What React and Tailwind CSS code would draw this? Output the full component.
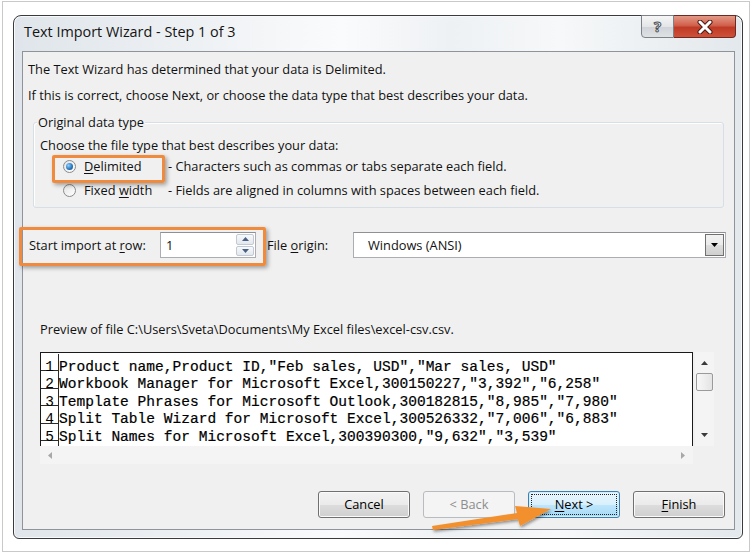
import React from "react";

const ui = "font-['Open_Sans','Noto_Sans',sans-serif]";
const mono = "font-['Liberation_Mono','Courier_New',monospace]";

function Radio({ checked }) {
  return (
    <span className="relative flex h-[13px] w-[13px] items-center justify-center rounded-full border border-[#8a8a8a] bg-[linear-gradient(135deg,#e4e4e4,#ffffff)]">
      {checked ? (
        <span className="h-[7px] w-[7px] rounded-full bg-[radial-gradient(circle_at_35%_35%,#8fd0ff_0%,#2a7bc0_55%,#0d3f78_100%)]" />
      ) : null}
    </span>
  );
}

function Btn({ children, kind }) {
  if (kind === "disabled") {
    return (
      <div className="flex h-[27px] w-[92px] items-center justify-center rounded-[3px] border border-[#b7bcc0] bg-[#f4f4f4] text-[12.8px] text-[#8d8d8d]">
        {children}
      </div>
    );
  }
  if (kind === "default") {
    return (
      <div className="flex h-[27px] w-[92px] items-center justify-center rounded-[3px] border border-[#3c7fb1] bg-[linear-gradient(180deg,#eaf6fd_0%,#d9f0fc_50%,#bee6fd_51%,#a7d9f5_100%)] p-[2px] shadow-[inset_0_0_0_1px_#cfeefe]">
        <div className="flex h-full w-full items-center justify-center border border-dotted border-[#222] text-[12.8px] text-black">
          {children}
        </div>
      </div>
    );
  }
  return (
    <div className="flex h-[27px] w-[92px] items-center justify-center rounded-[3px] border border-[#707070] bg-[linear-gradient(180deg,#f2f2f2_0%,#ebebeb_50%,#dddddd_51%,#cfcfcf_100%)] shadow-[inset_0_0_0_1px_#fafafa] text-[12.8px] text-black">
      {children}
    </div>
  );
}

const rows = [
  'Product name,Product ID,"Feb sales, USD","Mar sales, USD"',
  'Workbook Manager for Microsoft Excel,300150227,"3,392","6,258"',
  'Template Phrases for Microsoft Outlook,300182815,"8,985","7,980"',
  'Split Table Wizard for Microsoft Excel,300526332,"7,006","6,883"',
  'Split Names for Microsoft Excel,300390300,"9,632","3,539"',
];

export default function App() {
  return (
    <div className={`relative h-[554px] w-[755px] overflow-hidden bg-white pl-[2px] pt-[1px] ${ui}`}>
      <div className="h-[551px] w-[748px] border border-[#c9c9c9] pl-[10px] pt-[13px]">
        {/* window */}
        <div className="flex h-[524px] w-[730px] flex-col rounded-b-[6px] rounded-t-[8px] border border-[#3b3b3b] bg-[linear-gradient(90deg,#dfe5ea_0%,#eef1f4_25%,#fafbfc_45%,#eef1f4_60%,#f6f8f9_75%,#e3e8ec_100%)] shadow-[inset_0_0_0_1px_#f7f9fb]">
          {/* title bar */}
          <div className="flex h-[35px] items-start">
            <div className="ml-[10px] mt-[7px] text-[14.4px] leading-[18px] text-[#141414]">
              Text Import Wizard - Step 1 of 3
            </div>
            <div className="ml-auto mr-[6px] -mt-px flex">
              <div className="flex h-[23px] w-[33px] items-center justify-center rounded-bl-[4px] border border-[#7c8288] bg-[linear-gradient(180deg,#f6f6f6_0%,#e3e5e8_50%,#cfd3d7_51%,#dfe2e5_100%)]">
                <span className="text-[15px] font-bold leading-none text-white [-webkit-text-stroke:1px_#4b4f55]">?</span>
              </div>
              <div className="flex h-[23px] w-[62px] items-center justify-center rounded-br-[4px] border border-l-0 border-[#6d2a23] bg-[linear-gradient(180deg,#e39a88_0%,#d0604b_45%,#bf3a26_55%,#cf5139_100%)]">
                <svg width="20" height="14" viewBox="0 0 20 14">
                  <path d="M5 2 L15 12 M15 2 L5 12" stroke="#4a1a14" strokeWidth="5" strokeLinecap="round" />
                  <path d="M5 2 L15 12 M15 2 L5 12" stroke="#ffffff" strokeWidth="3" strokeLinecap="round" />
                </svg>
              </div>
            </div>
          </div>

          {/* content panel */}
          <div className="ml-[8px] flex h-[479px] w-[713px] flex-col border border-[#8e9499] bg-[#f0f0f0] text-[12.8px] text-[#111]">
            <div className="ml-[5px] mt-[9px] h-[16px] leading-[16px]">
              The Text Wizard has determined that your data is Delimited.
            </div>
            <div className="ml-[5px] mt-[10px] h-[16px] leading-[16px]">
              If this is correct, choose Next, or choose the data type that best describes your data.
            </div>

            {/* group box */}
            <div className="relative ml-[10px] mt-[19px] h-[86px] w-[691px] rounded-[3px] border border-[#d5dfe5] shadow-[inset_1px_1px_0_#ffffff]">
              <div className="absolute -top-[9px] left-[3px] bg-[#f0f0f0] px-[1px] leading-[16px]">
                Original data type
              </div>
              <div className="ml-[6px] mt-[14px] h-[16px] leading-[16px]">
                Choose the file type that best describes your data:
              </div>
              <div className="mt-[5px] flex h-[16px] items-center">
                <div className="ml-[29px]"><Radio checked /></div>
                <div className="ml-[8px] w-[84px] leading-[16px]">
                  <span className="underline decoration-1 underline-offset-2">D</span>elimited
                </div>
                <div className="leading-[16px]">- Characters such as commas or tabs separate each field.</div>
              </div>
              <div className="mt-[8px] flex h-[16px] items-center">
                <div className="ml-[29px]"><Radio /></div>
                <div className="ml-[8px] w-[84px] leading-[16px]">
                  Fixed <span className="underline decoration-1 underline-offset-2">w</span>idth
                </div>
                <div className="leading-[16px]">- Fields are aligned in columns with spaces between each field.</div>
              </div>
            </div>

            {/* start row */}
            <div className="mt-[24px] flex h-[26px] items-center">
              <div className="ml-[6px] w-[131px] leading-[16px]">
                Start import at <span className="underline decoration-1 underline-offset-2">r</span>ow:
              </div>
              <div className="flex h-[26px] w-[96px] items-center border border-[#abadb3] border-t-[#8e9096] bg-white">
                <div className="ml-[5px] flex-1 leading-[16px]">1</div>
                <div className="mr-[1px] flex h-[22px] w-[18px] flex-col gap-px">
                  <div className="flex flex-1 items-center justify-center rounded-[2px] border border-[#c3c9d2] bg-[linear-gradient(180deg,#f7f9fb,#e3e8ee)]">
                    <svg width="7" height="4" viewBox="0 0 7 4"><path d="M0 4 L3.5 0 L7 4 Z" fill="#4a5f82" /></svg>
                  </div>
                  <div className="flex flex-1 items-center justify-center rounded-[2px] border border-[#c3c9d2] bg-[linear-gradient(180deg,#f7f9fb,#e3e8ee)]">
                    <svg width="7" height="4" viewBox="0 0 7 4"><path d="M0 0 L3.5 4 L7 0 Z" fill="#4a5f82" /></svg>
                  </div>
                </div>
              </div>
              <div className="ml-[11px] w-[86px] leading-[16px]">
                File <span className="underline decoration-1 underline-offset-2">o</span>rigin:
              </div>
              <div className="flex h-[26px] w-[373px] items-center border border-[#abadb3] border-t-[#8e9096] bg-white">
                <div className="ml-[14px] flex-1 leading-[16px]">Windows (ANSI)</div>
                <div className="mr-[1px] flex h-[22px] w-[19px] items-center justify-center border border-[#707070] bg-[linear-gradient(180deg,#f2f2f2_0%,#ebebeb_50%,#dddddd_51%,#cfcfcf_100%)]">
                  <svg width="7" height="4" viewBox="0 0 7 4"><path d="M0 0 L3.5 4 L7 0 Z" fill="#000" /></svg>
                </div>
              </div>
            </div>

            {/* preview label */}
            <div className="ml-[17px] mt-[63px] h-[16px] leading-[16px]">
              Preview of file C:\Users\Sveta\Documents\My Excel files\excel-csv.csv.
            </div>

            {/* preview */}
            <div className="ml-[17px] mt-[15px] flex">
              <div className="flex w-[653px] flex-col">
                <div className="h-[94px] overflow-hidden border border-b-0 border-[#1a1a1a] bg-white pt-[0.5px]">
                  {[...rows, ""].map((r, i) => (
                    <div key={i} className="flex h-[17.5px]">
                      <div className={`flex w-[18px] shrink-0 justify-center border-b border-r border-[#2a2a2a] bg-white pt-[6px] text-[14.5px] leading-[14px] text-black ${mono}`}>
                        {r ? i + 1 : ""}
                      </div>
                      <div className={`whitespace-pre pt-[6px] text-[14.55px] leading-[14px] text-black [-webkit-text-stroke:0.2px_#000] ${mono}`}>
                        {r}
                      </div>
                    </div>
                  ))}
                </div>
                <div className="flex h-[18px] items-center justify-between bg-[#f4f4f4]">
                  <svg className="ml-[8px]" width="4" height="7" viewBox="0 0 4 7"><path d="M4 0 L0 3.5 L4 7 Z" fill="#a8a8a8" /></svg>
                  <svg className="mr-[8px]" width="4" height="7" viewBox="0 0 4 7"><path d="M0 0 L4 3.5 L0 7 Z" fill="#a8a8a8" /></svg>
                </div>
              </div>
              <div className="ml-[2px] flex h-[94px] w-[19px] flex-col items-center bg-[#f4f4f4]">
                <svg className="mt-[9px]" width="7" height="4" viewBox="0 0 7 4"><path d="M0 4 L3.5 0 L7 4 Z" fill="#3a3a3a" /></svg>
                <div className="mt-[8px] h-[18px] w-[17px] rounded-[2px] border border-[#9a9a9a] bg-[linear-gradient(90deg,#f8f8f8,#e4e4e4)]" />
                <svg className="mt-auto mb-[9px]" width="7" height="4" viewBox="0 0 7 4"><path d="M0 0 L3.5 4 L7 0 Z" fill="#3a3a3a" /></svg>
              </div>
            </div>

            {/* buttons */}
            <div className="mr-[9px] mt-[27px] flex justify-end gap-[13px]">
              <Btn>Cancel</Btn>
              <Btn kind="disabled">&lt; Back</Btn>
              <Btn kind="default">
                <span><span className="underline decoration-1 underline-offset-2">N</span>ext &gt;</span>
              </Btn>
              <Btn>
                <span><span className="underline decoration-1 underline-offset-2">F</span>inish</span>
              </Btn>
            </div>
          </div>
        </div>
      </div>

      {/* orange highlights (overlay) */}
      <div className="pointer-events-none absolute left-[52px] top-[155px] h-[28px] w-[113px] rounded-[2px] border-[3px] border-[#f08a3c] shadow-[2px_2px_4px_rgba(0,0,0,0.35)]" />
      <div className="pointer-events-none absolute left-[19px] top-[227px] h-[39px] w-[247px] rounded-[2px] border-[3px] border-[#f08a3c] shadow-[2px_2px_4px_rgba(0,0,0,0.35)]" />
      <svg className="pointer-events-none absolute left-0 top-0" width="755" height="554" viewBox="0 0 755 554">
        <defs>
          <filter id="sh" x="-20%" y="-50%" width="140%" height="200%">
            <feDropShadow dx="1" dy="2" stdDeviation="1.5" floodColor="#000" floodOpacity="0.4" />
          </filter>
        </defs>
        <polygon
          points="432,526 517,513 515,506 551,509 520,526 518,519 433,530"
          fill="#f3902e"
          filter="url(#sh)"
        />
      </svg>
    </div>
  );
}
